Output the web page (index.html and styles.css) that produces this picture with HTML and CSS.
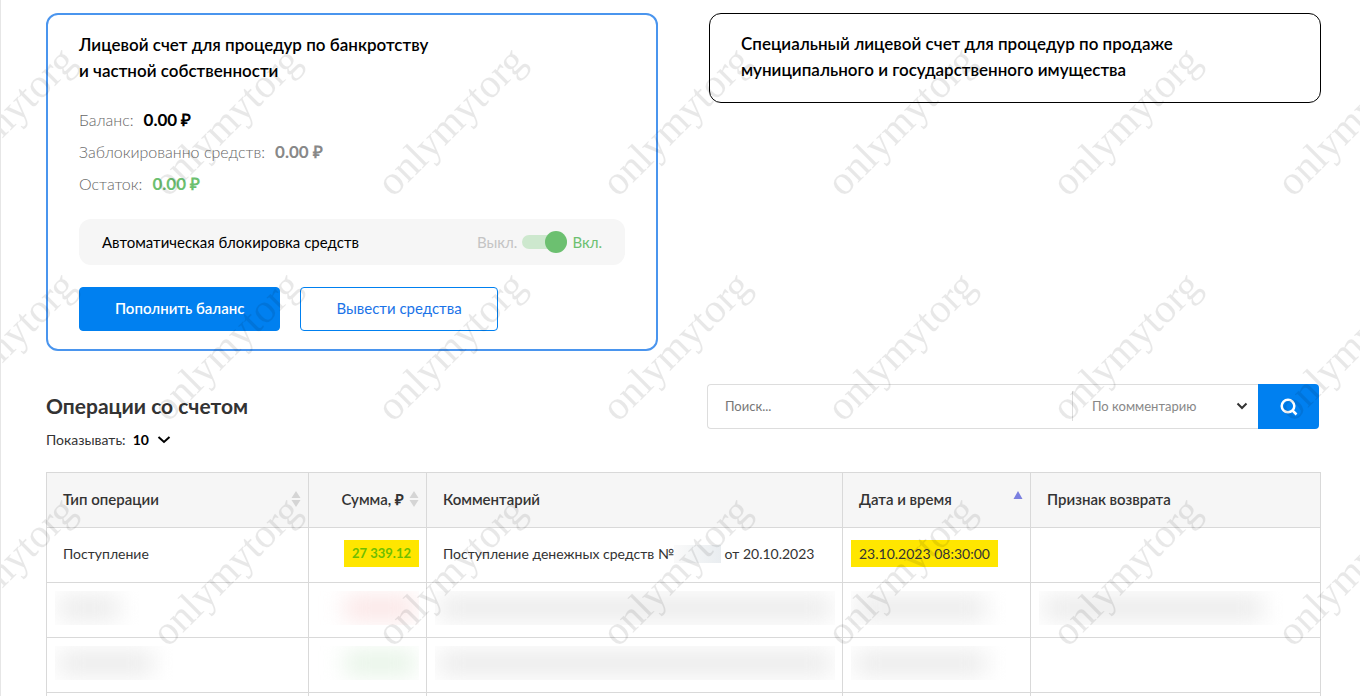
FILE: index.html
```html
<!DOCTYPE html>
<html lang="ru">
<head>
    <meta charset="UTF-8">
    <meta name="viewport" content="width=device-width, initial-scale=1.0">
    <title>Лицевой счет</title>
    <link rel="stylesheet" href="styles.css">
</head>
<body>
    <main class="page">
        <section class="accounts">
            <div class="account account-active">
                <h2 class="account-title">Лицевой счет для процедур по банкротству<br>и частной собственности</h2>
                <dl class="balance">
                    <div class="balance-row">
                        <dt>Баланс:</dt>
                        <dd>0.00 ₽</dd>
                    </div>
                    <div class="balance-row">
                        <dt>Заблокированно средств:</dt>
                        <dd class="blocked">0.00 ₽</dd>
                    </div>
                    <div class="balance-row">
                        <dt>Остаток:</dt>
                        <dd class="rest">0.00 ₽</dd>
                    </div>
                </dl>
                <div class="autoblock">
                    <label class="autoblock-label" for="autoblock">Автоматическая блокировка средств</label>
                    <span class="state-off">Выкл.</span>
                    <input class="toggle" type="checkbox" id="autoblock" checked>
                    <span class="state-on">Вкл.</span>
                </div>
                <div class="actions">
                    <button class="button button-primary" type="button">Пополнить баланс</button>
                    <button class="button button-outline" type="button">Вывести средства</button>
                </div>
            </div>
            <div class="account">
                <h2 class="account-title">Специальный лицевой счет для процедур по продаже<br>муниципального и государственного имущества</h2>
            </div>
        </section>

        <section class="operations">
            <div class="operations-head">
                <div>
                    <h1 class="operations-title">Операции со счетом</h1>
                    <div class="page-size">
                        <label for="pageSize">Показывать:</label>
                        <select class="page-size-select" id="pageSize">
                            <option>10</option>
                            <option>20</option>
                            <option>50</option>
                        </select>
                        <svg class="chevron" width="14" height="10" viewBox="0 0 14 10"><path d="M1.500 3 L7 8 L12.500 3"/></svg>
                    </div>
                </div>
                <form class="search" id="searchForm">
                    <input class="search-input" type="text" placeholder="Поиск..." aria-label="Поиск">
                    <div class="search-field">
                        <select class="search-select" aria-label="Поле поиска">
                            <option>По комментарию</option>
                            <option>По типу</option>
                        </select>
                        <svg class="chevron chevron-small" width="12" height="8" viewBox="0 0 12 8"><path d="M1.5 1.5 L6 6 L10.500 1.5"/></svg>
                    </div>
                    <button class="search-button" type="submit" aria-label="Найти">
                        <svg width="18" height="18" viewBox="0 0 18 18"><circle cx="8" cy="8" r="6.300"/><path d="M12 12 L16.500 16.500"/></svg>
                    </button>
                </form>
            </div>

            <table class="table">
                <colgroup>
                    <col class="col-type">
                    <col class="col-sum">
                    <col>
                    <col class="col-date">
                    <col class="col-return">
                </colgroup>
                <thead>
                    <tr>
                        <th>
                            <div class="th">Тип операции
                                <svg class="sorter" width="10" height="16" viewBox="0 0 10 16"><path d="M5 0 L9.500 7 H0.500 Z M5 16 L9.500 9 H0.500 Z"/></svg>
                            </div>
                        </th>
                        <th>
                            <div class="th th-sum">Сумма, ₽
                                <svg class="sorter" width="10" height="16" viewBox="0 0 10 16"><path d="M5 0 L9.500 7 H0.500 Z M5 16 L9.500 9 H0.500 Z"/></svg>
                            </div>
                        </th>
                        <th><div class="th">Комментарий</div></th>
                        <th>
                            <div class="th">Дата и время
                                <svg class="sorter sorter-active" width="10" height="16" viewBox="0 0 10 16"><path d="M5 0 L9.500 8 H0.500 Z"/></svg>
                            </div>
                        </th>
                        <th><div class="th">Признак возврата</div></th>
                    </tr>
                </thead>
                <tbody>
                    <tr>
                        <td><span class="value">Поступление</span></td>
                        <td class="sum"><mark class="value">27 339.12</mark></td>
                        <td><span class="value">Поступление денежных средств №<span class="number-hidden"></span> от 20.10.2023</span></td>
                        <td><mark class="value">23.10.2023 08:30:00</mark></td>
                        <td></td>
                    </tr>
                    <tr>
                        <td><div class="smudge smudge-short"></div></td>
                        <td class="sum"><div class="smudge smudge-red"></div></td>
                        <td><div class="smudge smudge-full"></div></td>
                        <td><div class="smudge smudge-date"></div></td>
                        <td><div class="smudge smudge-return"></div></td>
                    </tr>
                    <tr>
                        <td><div class="smudge smudge-type"></div></td>
                        <td class="sum"><div class="smudge smudge-green"></div></td>
                        <td><div class="smudge smudge-full"></div></td>
                        <td><div class="smudge smudge-date"></div></td>
                        <td></td>
                    </tr>
                    <tr>
                        <td></td>
                        <td></td>
                        <td></td>
                        <td></td>
                        <td></td>
                    </tr>
                </tbody>
            </table>
        </section>

        <!-- Watermark over the whole page -->
        <svg class="watermark" aria-hidden="true">
            <defs>
                <pattern id="mark" x="120" y="10" width="225" height="225" patternUnits="userSpaceOnUse">
                    <text class="watermark-text" transform="translate(47 188) rotate(-45)">onlymytorg</text>
                </pattern>
            </defs>
            <rect width="100%" height="100%" fill="url(#mark)"/>
        </svg>
    </main>

    <script>
        document.getElementById('searchForm').addEventListener('submit', function(event) {
            event.preventDefault();
        });
    </script>
</body>
</html>
```

FILE: styles.css
```css
* {
    box-sizing: border-box;
}
body {
    margin: 0;
    height: 100vh;
    overflow: hidden;
    background-color: #fff;
    font-family: Lato, "Open Sans", sans-serif;
    font-size: 15px;
    color: #333;
}
.page {
    position: relative;
    min-height: 100vh;
    padding: 13px 39px 0 45px;
    border-left: 1px solid #e6e6e6;
}
h1, h2, dl, dd {
    margin: 0;
}
button, input, select {
    font-family: inherit;
}

/* Accounts */
.accounts {
    display: grid;
    grid-template-columns: 1fr 1fr;
    gap: 51px;
    align-items: start;
}
.account {
    padding: 17px 31px 19px;
    border: 1px solid #000;
    border-radius: 12px;
}
.account-active {
    padding-bottom: 18px;
    border: 2px solid #4a95ee;
}
.account-title {
    font-size: 17px;
    line-height: 26px;
    font-weight: 600;
    color: #000;
}
.balance {
    margin-top: 20px;
}
.balance-row {
    display: flex;
    align-items: baseline;
    gap: 10px;
    line-height: 32px;
}
.balance dt {
    font-size: 16px;
    font-weight: 300;
    color: #666;
}
.balance dd {
    font-size: 17px;
    font-weight: 700;
    color: #000;
}
.balance .blocked {
    color: #888;
}
.balance .rest {
    color: #6cc070;
}
.autoblock {
    display: flex;
    align-items: center;
    gap: 5px;
    height: 46px;
    margin-top: 19px;
    padding: 0 23px;
    border-radius: 12px;
    background-color: #f6f6f6;
}
.autoblock-label {
    margin-right: auto;
    color: #000;
}
.state-off {
    color: #c4c4c4;
}
.state-on {
    color: #6cc070;
}
/* Switch: pale track with a round knob */
.toggle {
    appearance: none;
    display: flex;
    align-items: center;
    width: 45px;
    height: 14px;
    margin: 0;
    border-radius: 7px;
    background-color: #cde8ce;
    cursor: pointer;
}
.toggle::before {
    content: "";
    width: 22px;
    height: 22px;
    border-radius: 50%;
    background-color: #6cc070;
}
.toggle:checked {
    justify-content: flex-end;
}
.actions {
    display: flex;
    gap: 20px;
    margin-top: 22px;
}
.button {
    height: 44px;
    padding: 0 35px 3px;
    border: 1px solid #0080f0;
    border-radius: 4px;
    font-size: 15px;
    cursor: pointer;
}
.button-primary {
    background-color: #0080f0;
    color: #fff;
    font-weight: 600;
}
.button-outline {
    background-color: #fff;
    color: #1a73e8;
}

/* Operations */
.operations-head {
    display: grid;
    grid-template-columns: 1fr 612px;
    align-items: start;
    margin-top: 33px;
    padding-right: 2px;
}
.operations-title {
    font-size: 21px;
    line-height: 44px;
    font-weight: 700;
}
.page-size {
    display: flex;
    align-items: center;
    gap: 7px;
    height: 22px;
    font-size: 14px;
}
.page-size-select {
    appearance: none;
    padding: 0;
    border: 0;
    background: none;
    font-size: 14px;
    font-weight: 700;
    color: #000;
}
.chevron {
    fill: none;
    stroke: #000;
    stroke-width: 2;
}
.search {
    display: flex;
    height: 45px;
}
.search-input {
    flex: 1;
    min-width: 0;
    padding: 0 17px 2px;
    border: 1px solid #ddd;
    border-right: 0;
    border-radius: 4px 0 0 4px;
    font-size: 13px;
}
.search-input::placeholder {
    color: #777;
}
.search-field {
    display: flex;
    align-items: center;
    width: 186px;
    padding: 0 10px 2px 0;
    border: solid #ddd;
    border-width: 1px 0;
}
.search-select {
    appearance: none;
    flex: 1;
    height: 30px;
    padding: 0 19px;
    border: 0;
    border-left: 1px solid #ddd;
    background: none;
    font-size: 13px;
    color: #888;
}
.chevron-small {
    stroke: #333;
}
.search-button {
    display: flex;
    align-items: center;
    justify-content: center;
    width: 61px;
    padding: 0;
    border: 0;
    border-radius: 0 4px 4px 0;
    background-color: #0080f0;
    cursor: pointer;
}
.search-button svg {
    fill: none;
    stroke: #fff;
    stroke-width: 2.5;
}
.table {
    width: 100%;
    margin-top: 22px;
    table-layout: fixed;
    border-collapse: collapse;
    font-size: 14px;
}
.col-type {
    width: 262px;
}
.col-sum {
    width: 118px;
}
.col-date {
    width: 188px;
}
.col-return {
    width: 290px;
}
.table th, .table td {
    height: 55px;
    padding: 0 7px;
    border: 1px solid #d9d9d9;
    text-align: left;
    white-space: nowrap;
}
.table td {
    padding: 0 7px 4px 8px;
}
.table th {
    padding-bottom: 2px;
    background-color: #f6f6f6;
    font-weight: 600;
    font-size: 15px;
}
.th {
    display: flex;
    align-items: center;
    justify-content: space-between;
    padding-left: 9px;
}
.th-sum {
    justify-content: flex-end;
    gap: 5px;
    padding-left: 0;
}
.sorter {
    flex: none;
    fill: #d5d5d5;
}
.sorter-active {
    fill: #7b80e0;
}
.value {
    display: inline-block;
    padding: 0 8px;
    line-height: 27px;
    color: #333;
    vertical-align: middle;
}
mark.value {
    background-color: #ffe600;
}
.table .sum {
    padding-left: 0;
    text-align: right;
}
.sum .value {
    font-size: 13px;
    font-weight: 700;
    color: #6fbf00;
}
.number-hidden {
    display: inline-block;
    width: 47px;
    height: 18px;
    vertical-align: -4px;
    background: linear-gradient(to right, #fafafa, #e9edf0);
}

/* Hidden values */
.smudge {
    height: 34px;
    overflow: hidden;
    padding: 5px 20px 5px 4px;
}
.smudge::before {
    content: "";
    display: block;
    height: 24px;
    background-color: #ebebeb;
    filter: blur(11px);
}
.smudge-short {
    width: 84px;
}
.smudge-type {
    width: 118px;
}
.smudge-full {
    padding-right: 4px;
}
.smudge-date {
    width: 155px;
}
.smudge-return {
    width: 244px;
}
.smudge-red, .smudge-green {
    padding: 5px 4px 5px 36px;
}
.smudge-red::before {
    background-color: #fbe5e5;
}
.smudge-green::before {
    background-color: #e6f4e6;
}

.watermark {
    position: absolute;
    inset: 0;
    width: 100%;
    height: 100%;
    pointer-events: none;
}
.watermark-text {
    font-family: "Liberation Serif", serif;
    font-size: 41px;
    fill: #000;
    fill-opacity: 0.090;
}
```
